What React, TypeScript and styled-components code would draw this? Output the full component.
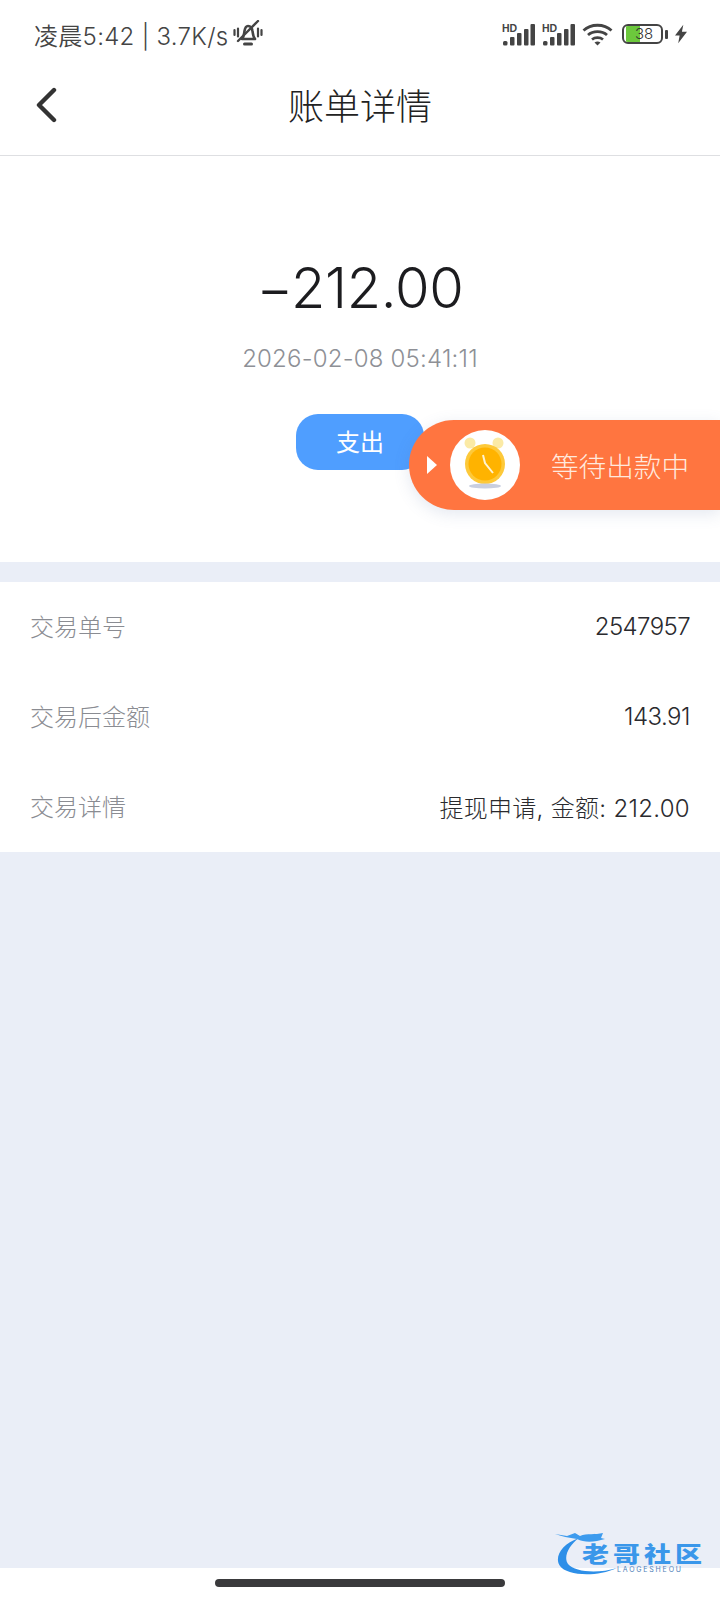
import React from "react";
import styled, { createGlobalStyle } from "styled-components";

const FONT = `Inter, "Noto Sans CJK SC", sans-serif`;

const rows = [
  { label: "交易单号", value: "2547957", spacing: -0.6 },
  { label: "交易后金额", value: "143.91", spacing: -0.5 },
  { label: "交易详情", value: "提现申请, 金额: 212.00", spacing: 0.3 },
];

const SignalIcon = () => (
  <svg width="33" height="23" viewBox="0 0 33 23">
    <text x="0" y="9" fontFamily="Liberation Sans, sans-serif" fontWeight="700" fontSize="10.5" fill="#444">HD</text>
    <rect x="1" y="18" width="4.500" height="4.500" rx="1.500" fill="#444" />
    <rect x="8" y="14" width="4.500" height="8.500" rx="1" fill="#444" />
    <rect x="15" y="10" width="4.500" height="12.500" rx="1" fill="#444" />
    <rect x="22" y="6" width="4.500" height="16.500" rx="1" fill="#444" />
    <rect x="28.500" y="1" width="4.500" height="21.500" rx="1" fill="#444" />
  </svg>
);

const App = () => {
  return (
    <Page>
      <GlobalStyle />
      <StatusBar>
        <StatusLeft>
          <StatusText>凌晨5:42 | 3.7K/s</StatusText>
          <svg width="30" height="28" viewBox="0 0 30 28">
            <path d="M9 19c2-2 2-5 2.500-8 .5-3 2-5 3.500-5s4 1 4.500 5c.5 3 .5 6 2.500 8z" fill="none" stroke="#444" strokeWidth="2.600" strokeLinejoin="round" />
            <path d="M11.500 24h7" stroke="#444" strokeWidth="3" strokeLinecap="round" />
            <path d="M5 21 25 1" stroke="#444" strokeWidth="2.400" strokeLinecap="round" />
            <path d="M1.500 10v5M5 8.500v8M25 8.500v8M28.500 10v5" stroke="#444" strokeWidth="2.200" strokeLinecap="round" />
          </svg>
        </StatusLeft>
        <StatusRight>
          <SignalIcon />
          <SignalIcon />
          <svg width="31" height="23" viewBox="0 0 31 23">
            <path d="M1.500 7.500C9 .5 22 .5 29.500 7.500M6 12c5-4.500 14-4.500 19 0M10 16.500c3-2.400 8-2.400 11 0" fill="none" stroke="#444" strokeWidth="2.800" />
            <path d="M12.500 19.500c2-1.500 4-1.500 6 0l-3 3z" fill="#444" />
          </svg>
          <Battery>
            <BatteryBody>
              <BatteryFill />
              <BatteryLabel>38</BatteryLabel>
            </BatteryBody>
            <BatteryCap />
          </Battery>
          <svg width="12" height="20" viewBox="0 0 13 20">
            <path d="M9 0 0 11.500h5L3.500 20 13 7.500H7.500z" fill="#444" />
          </svg>
        </StatusRight>
      </StatusBar>

      <NavBar>
        <BackIcon viewBox="0 0 22 36">
          <path d="M19 3 4 18l15 15" fill="none" stroke="#333" strokeWidth="4.400" strokeLinecap="round" strokeLinejoin="round" />
        </BackIcon>
        <Title>账单详情</Title>
      </NavBar>

      <Hero>
        <Amount>−212.00</Amount>
        <DateText>2026-02-08 05:41:11</DateText>
        <TypeTag>支出</TypeTag>
      </Hero>

      <List>
        {rows.map((row) => (
          <Row key={row.label}>
            <Label>{row.label}</Label>
            <Value $spacing={row.spacing}>{row.value}</Value>
          </Row>
        ))}
      </List>

      <Filler />
      <BottomBar>
        <HomeBar />
      </BottomBar>

      <FloatPill>
        <PillArrow />
        <ClockCircle>
          <svg width="70" height="70" viewBox="0 0 70 70">
            <circle cx="20" cy="13" r="5.500" fill="#fbeaa5" />
            <circle cx="48" cy="13" r="5.500" fill="#fbeaa5" />
            <circle cx="35" cy="34" r="20" fill="#fdc93a" />
            <circle cx="35" cy="34" r="16.500" fill="#ffb300" />
            <path d="M33 25l2 8 8 10" fill="none" stroke="#fff3d0" strokeWidth="2" />
            <ellipse cx="35" cy="56" rx="16" ry="2.500" fill="#c9cfe0" />
          </svg>
        </ClockCircle>
        <PillText>等待出款中</PillText>
      </FloatPill>

      <Logo>
        <svg width="150" height="50" viewBox="0 0 150 50">
          <path d="M24 8C6 14-1 28 5 36c6 9 35 12 57 2-20 6-42 4-49-4C8 27 14 15 24 8z" fill="#2d8fe8" />
          <path d="M0 4l12 2 8-3 5 3c7-3 15-1 23-3l-2 5 4 1c-10 3-20 4-28 0C14 8 6 6 0 4z" fill="#3d9bee" />
        </svg>
        <LogoText>老哥社区</LogoText>
        <LogoSub>LAOGESHEOU</LogoSub>
      </Logo>
    </Page>
  );
};

export default App;

const GlobalStyle = createGlobalStyle`
  html, body {
    margin: 0;
    padding: 0;
    background: #fff;
  }
`;

const Page = styled.div`
  position: relative;
  width: 720px;
  height: 1600px;
  overflow: hidden;
  display: flex;
  flex-direction: column;
  background-color: #fff;
  font-family: ${FONT};
`;

const StatusBar = styled.div`
  height: 68px;
  flex-shrink: 0;
  display: flex;
  justify-content: space-between;
  align-items: center;
  padding: 0 33px 0 34px;
  box-sizing: border-box;
`;

const StatusLeft = styled.div`
  display: flex;
  align-items: center;
  gap: 5px;
`;

const StatusText = styled.span`
  font-size: 24px;
  font-weight: 350;
  letter-spacing: 0.3px;
  color: #444;
  white-space: nowrap;
`;

const StatusRight = styled.div`
  display: flex;
  align-items: center;
  gap: 7px;
`;

const Battery = styled.div`
  display: flex;
  align-items: center;
  gap: 2px;
  margin-left: 2px;
`;

const BatteryBody = styled.div`
  position: relative;
  width: 41px;
  height: 20px;
  box-sizing: border-box;
  border: 2.5px solid #444;
  border-radius: 6px;
  overflow: hidden;
`;

const BatteryFill = styled.div`
  width: 14px;
  height: 100%;
  margin-left: 2px;
  background-color: #6cc83c;
`;

const BatteryLabel = styled.span`
  position: absolute;
  left: 11px;
  top: -2px;
  font-size: 15px;
  line-height: 19px;
  color: #333;
  font-weight: 300;
`;

const BatteryCap = styled.div`
  width: 3px;
  height: 9px;
  border-radius: 1px;
  background-color: #444;
`;

const NavBar = styled.div`
  position: relative;
  height: 87px;
  flex-shrink: 0;
  display: flex;
  align-items: center;
  justify-content: center;
  border-bottom: 1px solid #dedfe2;
`;

const BackIcon = styled.svg`
  position: absolute;
  left: 35px;
  top: 19px;
  width: 22px;
  height: 36px;
`;

const Title = styled.div`
  font-size: 36px;
  font-weight: 300;
  color: #222;
  margin-bottom: 16px;
`;

const Hero = styled.div`
  height: 406px;
  flex-shrink: 0;
  box-sizing: border-box;
  padding-top: 97px;
  display: flex;
  flex-direction: column;
  align-items: center;
`;

const Amount = styled.div`
  font-size: 56px;
  line-height: 70px;
  font-weight: 300;
  letter-spacing: -0.3px;
  color: #1c1c1f;
`;

const DateText = styled.div`
  margin-top: 21px;
  font-size: 24px;
  line-height: 30px;
  font-weight: 300;
  letter-spacing: 0.2px;
  color: #8e9096;
`;

const TypeTag = styled.div`
  margin-top: 40px;
  width: 128px;
  height: 56px;
  border-radius: 22px;
  background-color: #4f9eff;
  color: #fff;
  font-size: 24px;
  padding-bottom: 3px;
  box-sizing: border-box;
  display: flex;
  align-items: center;
  justify-content: center;
`;

const List = styled.div`
  margin-top: 20px;
  background-color: #fff;
  display: flex;
  flex-direction: column;
  box-shadow: 0 -20px 0 #eaeef7;
`;

const Row = styled.div`
  height: 90px;
  display: flex;
  align-items: center;
  justify-content: space-between;
  padding: 0 30px;
`;

const Label = styled.span`
  font-size: 24px;
  font-weight: 300;
  color: #8a8c92;
  margin-bottom: 3px;
`;

const Value = styled.span<{ $spacing: number }>`
  font-size: 24px;
  font-weight: 300;
  letter-spacing: ${(p) => p.$spacing}px;
  color: #2a2a2e;
  margin-bottom: 1px;
`;

const Filler = styled.div`
  flex: 1;
  background-color: #eaeef7;
`;

const BottomBar = styled.div`
  height: 32px;
  flex-shrink: 0;
  display: flex;
  justify-content: center;
  align-items: center;
  background-color: #fff;
`;

const HomeBar = styled.div`
  width: 290px;
  height: 8px;
  border-radius: 4px;
  background-color: #3a3a3c;
  margin-top: -2px;
`;

const FloatPill = styled.div`
  position: absolute;
  left: 409px;
  top: 420px;
  width: 311px;
  height: 90px;
  box-sizing: border-box;
  border-radius: 45px 0 0 45px;
  background-color: #ff7540;
  box-shadow: 0 4px 16px rgba(90, 110, 160, 0.16);
  display: flex;
  align-items: center;
  padding-left: 18px;
`;

const PillArrow = styled.div`
  width: 0;
  height: 0;
  border-left: 10px solid #fff;
  border-top: 9px solid transparent;
  border-bottom: 9px solid transparent;
`;

const ClockCircle = styled.div`
  width: 70px;
  height: 70px;
  margin-left: 13px;
  border-radius: 50%;
  background-color: #fff;
  overflow: hidden;
`;

const PillText = styled.span`
  margin-left: 31px;
  font-size: 27.6px;
  font-weight: 300;
  color: #ffe9de;
  white-space: nowrap;
`;

const Logo = styled.div`
  position: absolute;
  left: 555px;
  top: 1530px;
  width: 150px;
  height: 50px;
`;

const LogoText = styled.div`
  position: absolute;
  left: 27px;
  top: 15px;
  font-size: 27px;
  line-height: 20px;
  font-weight: 900;
  letter-spacing: 4px;
  color: #3a97ea;
  white-space: nowrap;
  transform: scaleY(0.78);
`;

const LogoSub = styled.div`
  position: absolute;
  left: 62px;
  top: 36px;
  font-size: 7px;
  line-height: 8px;
  letter-spacing: 1.8px;
  color: #4f7fb8;
  white-space: nowrap;
`;
